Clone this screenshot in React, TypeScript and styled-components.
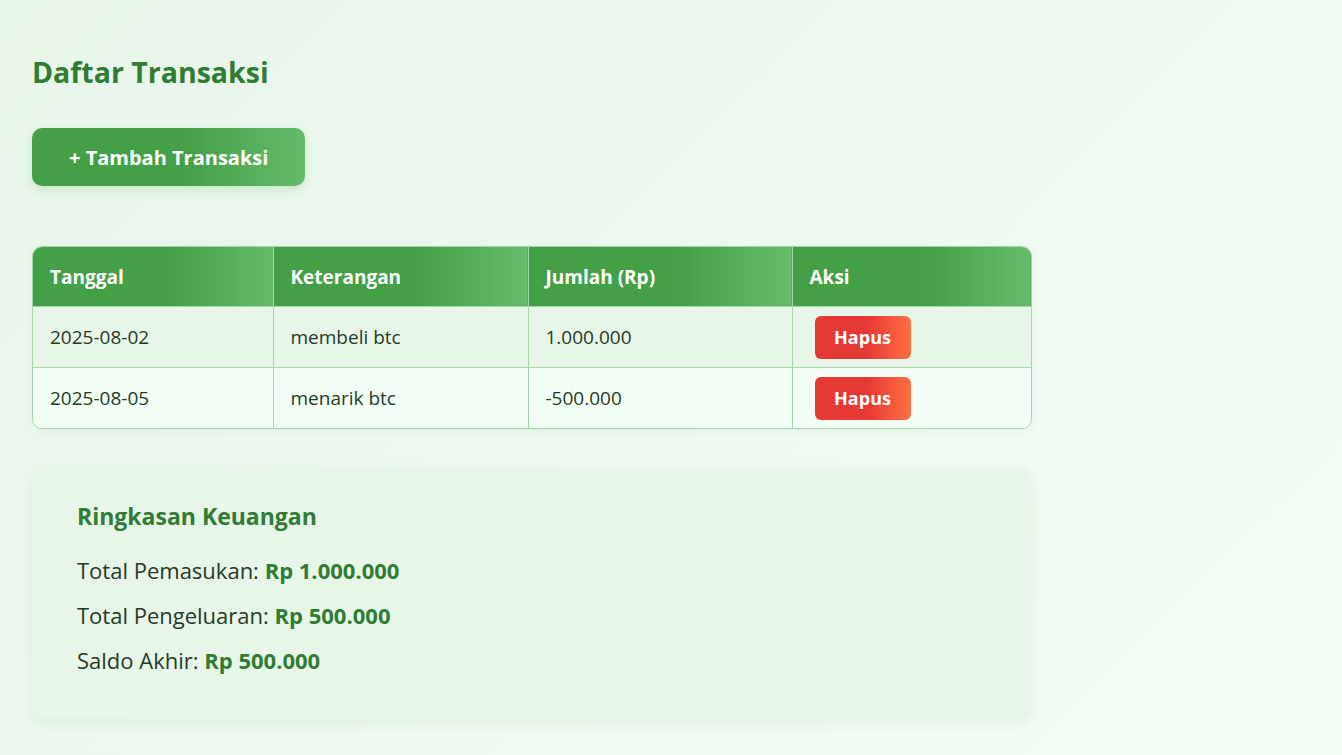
import React from "react";
import styled, { createGlobalStyle } from "styled-components";

const GlobalStyle = createGlobalStyle`
  html, body { margin: 0; padding: 0; }
  body {
    font-family: "Open Sans", "Noto Sans", sans-serif;
    background: linear-gradient(135deg, #e8f5e9 0%, #effaf1 60%, #f4fdf6 100%);
    min-height: 100vh;
    color: #243b26;
  }
`;

const Page = styled.div`
  padding: 48px 32px 36px;
  display: flex;
  flex-direction: column;
  align-items: flex-start;
  max-width: 1000px;
`;

const Title = styled.h2`
  margin: 0 0 32px;
  font-size: 28.5px;
  line-height: 48px;
  font-weight: 700;
  color: #2e7d32;
`;

const AddButton = styled.button`
  font-family: inherit;
  height: 58px;
  padding: 0 37px;
  border: none;
  border-radius: 10px;
  background: linear-gradient(90deg, #43a047 55%, #66bb6a 100%);
  color: #fff;
  font-size: 20px;
  font-weight: 700;
  box-shadow: 0 4px 10px rgba(67, 160, 71, 0.18);
  cursor: pointer;
  margin-bottom: 60px;
`;

const TableWrap = styled.div`
  box-sizing: border-box;
  width: 1000px;
  border-radius: 10px;
  overflow: hidden;
  border: 1px solid #a5d6a7;
  box-shadow: 0 2px 8px rgba(46, 125, 50, 0.06);
  margin-bottom: 40px;
`;

const Table = styled.table`
  width: 100%;
  table-layout: fixed;
  border-collapse: collapse;
  font-size: 19px;
`;

const Th = styled.th`
  height: 59px;
  padding: 0 17px;
  text-align: left;
  font-weight: 700;
  color: #fff;
  background: linear-gradient(90deg, #43a047 55%, #66bb6a 100%);
  border-left: 1px solid #a5d6a7;
  &:first-child { border-left: none; }
`;

const Tr = styled.tr<{ $alt?: boolean }>`
  background: ${(p) => (p.$alt ? "#f3fff5" : "#e8f5e9")};
`;

const Td = styled.td`
  height: 60px;
  padding: 0 17px;
  border-top: 1px solid #a5d6a7;
  border-left: 1px solid #a5d6a7;
  color: #243b26;
  &:first-child { border-left: none; }
`;

const ActionTd = styled(Td)`
  padding-left: 22px;
`;

const DeleteButton = styled.button`
  font-family: inherit;
  width: 96px;
  height: 43px;
  border: none;
  border-radius: 6px;
  background: linear-gradient(90deg, #e53935 55%, #ff7043 100%);
  color: #fff;
  font-size: 18px;
  font-weight: 700;
  cursor: pointer;
`;

const Summary = styled.div`
  box-sizing: border-box;
  width: 1000px;
  background: #e8f5e9;
  border-radius: 12px;
  box-shadow: 0 4px 14px rgba(46, 125, 50, 0.08);
  padding: 30px 45px 36px;
`;

const SummaryTitle = styled.h3`
  margin: 0 0 15px;
  font-size: 23px;
  line-height: 34px;
  font-weight: 700;
  color: #2e7d32;
`;

const Line = styled.p`
  margin: 0;
  font-size: 22px;
  line-height: 45px;
  color: #243b26;
`;

const Value = styled.strong`
  color: #2e7d32;
  font-weight: 700;
`;

const rows = [
  { date: "2025-08-02", desc: "membeli btc", amount: "1.000.000" },
  { date: "2025-08-05", desc: "menarik btc", amount: "-500.000" },
];

const colWidths = [240, 255, 264, 239];

export default function App() {
  return (
    <>
      <GlobalStyle />
      <Page>
        <Title>Daftar Transaksi</Title>
        <AddButton>+ Tambah Transaksi</AddButton>
        <TableWrap>
          <Table>
            <colgroup>
              {colWidths.map((w, i) => (
                <col key={i} style={{ width: w }} />
              ))}
            </colgroup>
            <thead>
              <tr>
                <Th>Tanggal</Th>
                <Th>Keterangan</Th>
                <Th>Jumlah (Rp)</Th>
                <Th>Aksi</Th>
              </tr>
            </thead>
            <tbody>
              {rows.map((r, i) => (
                <Tr key={r.date} $alt={i % 2 === 1}>
                  <Td>{r.date}</Td>
                  <Td>{r.desc}</Td>
                  <Td>{r.amount}</Td>
                  <ActionTd>
                    <DeleteButton>Hapus</DeleteButton>
                  </ActionTd>
                </Tr>
              ))}
            </tbody>
          </Table>
        </TableWrap>
        <Summary>
          <SummaryTitle>Ringkasan Keuangan</SummaryTitle>
          <Line>
            Total Pemasukan: <Value>Rp 1.000.000</Value>
          </Line>
          <Line>
            Total Pengeluaran: <Value>Rp 500.000</Value>
          </Line>
          <Line>
            Saldo Akhir: <Value>Rp 500.000</Value>
          </Line>
        </Summary>
      </Page>
    </>
  );
}
